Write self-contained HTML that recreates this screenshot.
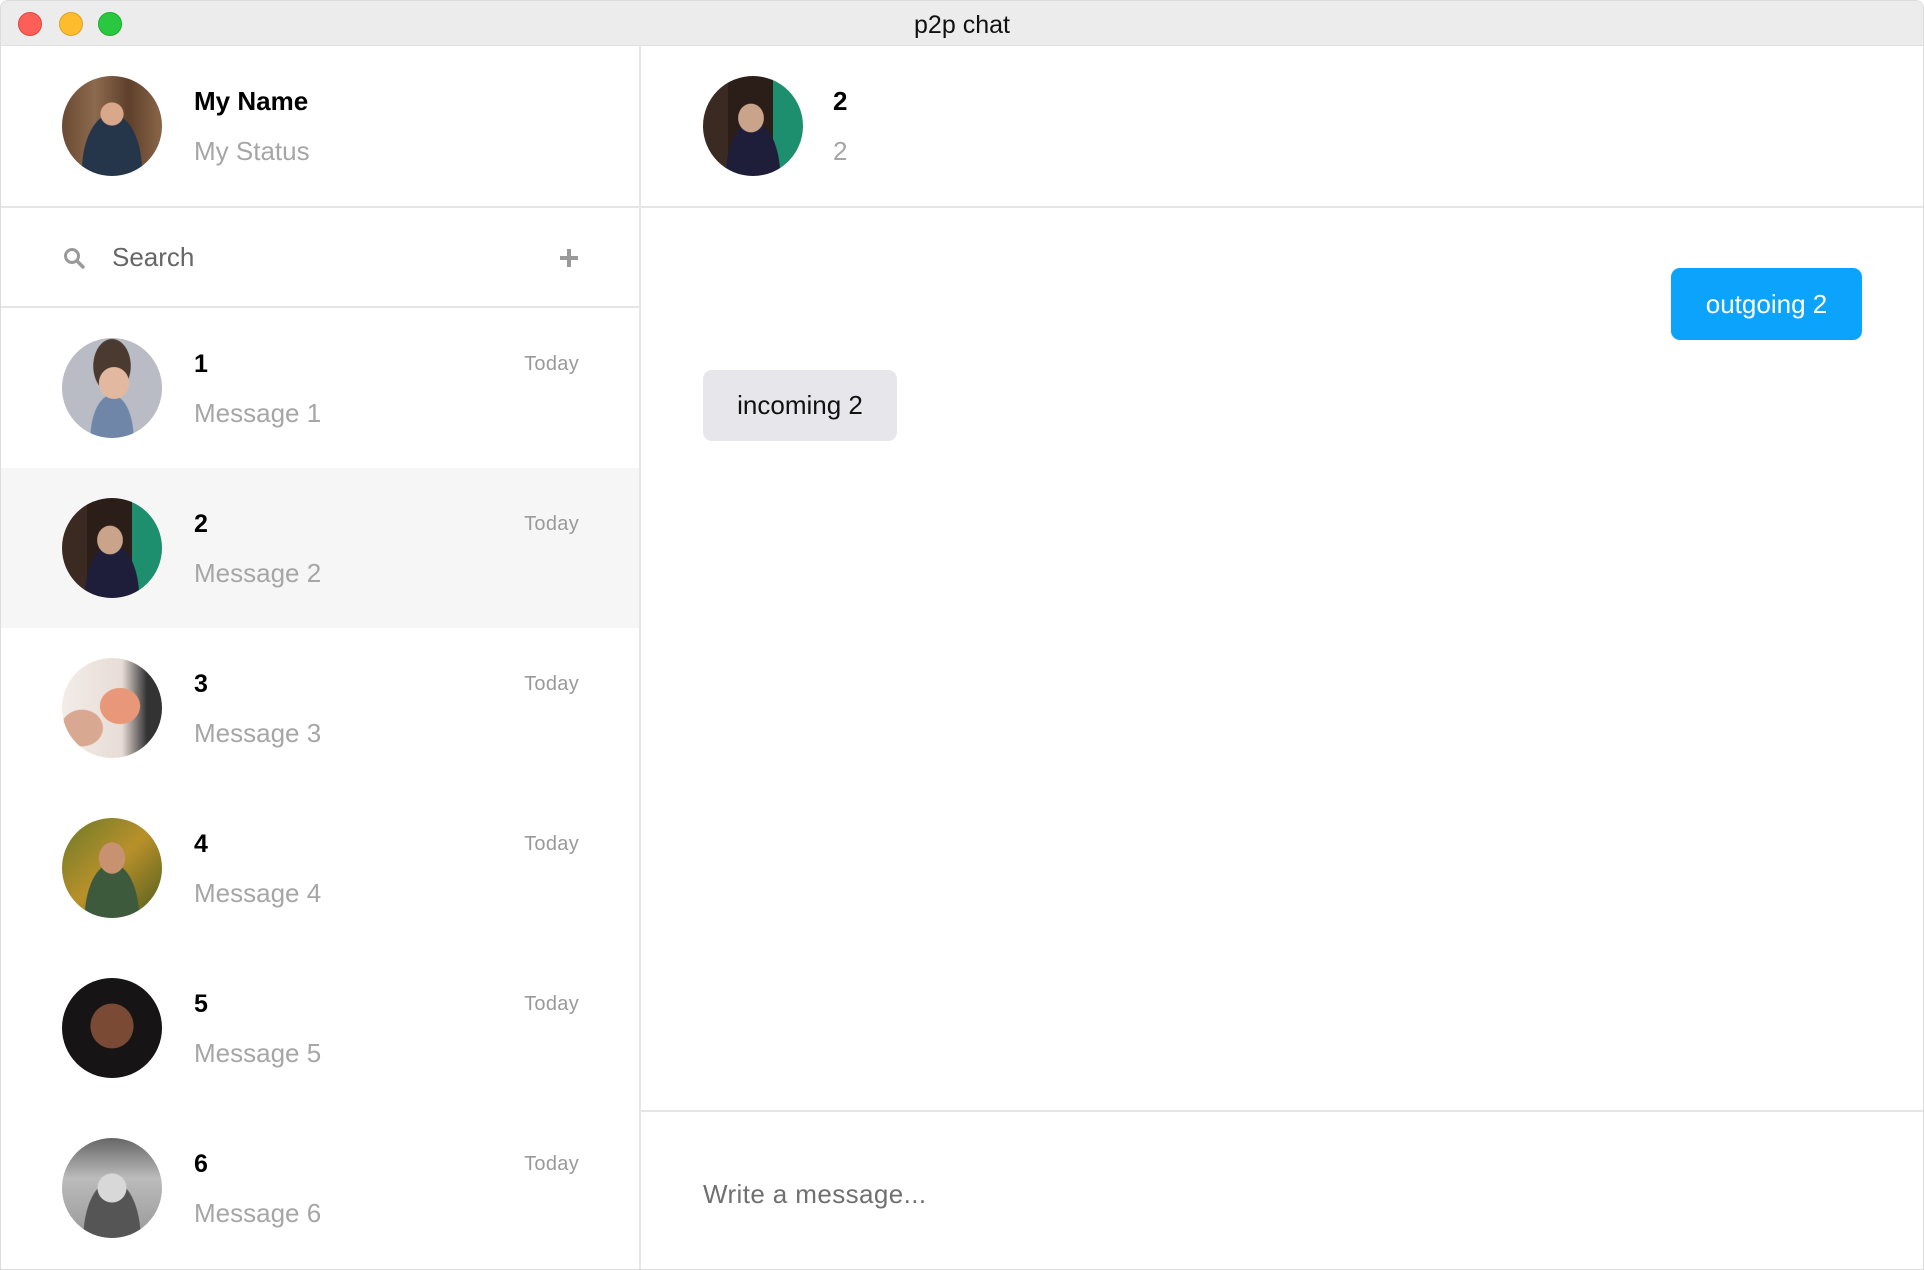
<!DOCTYPE html>
<html><head><meta charset="utf-8"><style>
*{box-sizing:border-box;margin:0;padding:0}
body{width:1924px;height:1270px;background:#fff;font-family:"Liberation Sans",sans-serif;overflow:hidden;position:relative}
.win{position:absolute;left:0;top:0;width:1924px;height:1270px;border:1px solid #dcdcdc;border-radius:8px 8px 0 0;overflow:hidden;background:#fff}
.title{position:absolute;left:0;top:0;width:100%;height:45px;background:#ececec;border-bottom:1px solid #e0e0e0;text-align:center;line-height:48px;font-size:25px;color:#111}
.tl{position:absolute;top:11px;width:24px;height:24px;border-radius:50%}
.side{position:absolute;left:0;top:45px;width:640px;bottom:0;border-right:2px solid #e6e6e6}
.hdr{position:absolute;left:0;top:0;width:100%;height:162px;border-bottom:2px solid #e6e6e6}
.av{position:absolute;width:100px;height:100px;border-radius:50%;overflow:hidden}
.nm{position:absolute;font-size:26px;font-weight:bold;color:#000}
.st{position:absolute;font-size:26px;color:#a6a6a6}
.search{position:absolute;left:0;top:162px;width:100%;height:100px;border-bottom:2px solid #e6e6e6}
.row{position:absolute;left:0;width:638px;height:160px}
.today{position:absolute;right:60px;font-size:20px;color:#9a9a9a;letter-spacing:0.3px}
.main{position:absolute;left:640px;top:45px;right:0;bottom:0}
.bub{position:absolute;font-size:26px;border-radius:9px;text-align:center}
</style></head><body><div class="win">
<div class="title">p2p chat
<div class="tl" style="left:17px;background:#fc5f57;border:1px solid #e0443e"></div>
<div class="tl" style="left:58px;background:#fdbc2e;border:1px solid #dea123"></div>
<div class="tl" style="left:97px;background:#29c840;border:1px solid #1aab29"></div>
</div>
<div class="side">
 <div class="hdr">
  <div class="av" style="left:61px;top:30px;background:radial-gradient(circle at 50% 38%,#d9a88a 0 14%,transparent 15%),radial-gradient(ellipse at 50% 95%,#26364a 0 42%,transparent 43%),linear-gradient(90deg,#6b4a33,#8c6a4e,#5e402b,#8a6648)"></div>
  <div class="nm" style="left:193px;top:40px">My Name</div>
  <div class="st" style="left:193px;top:90px">My Status</div>
 </div>
 <div class="search">
  <svg style="position:absolute;left:62px;top:39px" width="22" height="22" viewBox="0 0 22 22"><circle cx="9" cy="9" r="6.5" fill="none" stroke="#9a9a9a" stroke-width="3"/><line x1="14" y1="14" x2="20" y2="20" stroke="#9a9a9a" stroke-width="3.5" stroke-linecap="round"/></svg>
  <div style="position:absolute;left:111px;top:34px;font-size:26px;color:#666">Search</div>
  <svg style="position:absolute;left:558px;top:40px" width="20" height="20" viewBox="0 0 20 20"><path d="M10 1v18M1 10h18" stroke="#999" stroke-width="4"/></svg>
 </div>

 <div class="row" style="top:262px">
  <div class="av" style="left:61px;top:30px;background:radial-gradient(ellipse at 52% 45%,#e2b9a0 0 20%,transparent 21%),radial-gradient(ellipse at 50% 28%,#4a3a30 0 26%,transparent 27%),radial-gradient(ellipse at 50% 100%,#6f86a8 0 30%,transparent 31%),#b9bcc4"></div>
  <div class="nm" style="left:193px;top:42px;font-size:25px">1</div>
  <div class="today" style="top:45px">Today</div>
  <div class="st" style="left:193px;top:90px">Message 1</div>
 </div>
 <div class="row" style="top:422px;background:#f6f6f6">
  <div class="av" style="left:61px;top:30px;background:radial-gradient(ellipse at 48% 42%,#c9a48a 0 17%,transparent 18%),radial-gradient(ellipse at 50% 100%,#1f1e3a 0 38%,transparent 39%),linear-gradient(90deg,#3a2a22 0 25%,#2b1e18 25% 70%,#1e8f6e 70%)"></div>
  <div class="nm" style="left:193px;top:42px;font-size:25px">2</div>
  <div class="today" style="top:45px">Today</div>
  <div class="st" style="left:193px;top:90px">Message 2</div>
 </div>
 <div class="row" style="top:582px">
  <div class="av" style="left:61px;top:30px;background:radial-gradient(ellipse at 58% 48%,#e89878 0 24%,transparent 25%),radial-gradient(ellipse at 20% 70%,#d8a890 0 18%,transparent 19%),linear-gradient(90deg,#f2ece8,#e8dcd6 60%,#333 85%)"></div>
  <div class="nm" style="left:193px;top:42px;font-size:25px">3</div>
  <div class="today" style="top:45px">Today</div>
  <div class="st" style="left:193px;top:90px">Message 3</div>
 </div>
 <div class="row" style="top:742px">
  <div class="av" style="left:61px;top:30px;background:radial-gradient(ellipse at 50% 40%,#c89270 0 18%,transparent 19%),radial-gradient(ellipse at 50% 100%,#3e5a3c 0 38%,transparent 39%),linear-gradient(135deg,#6b7a2a,#b9902a,#4e5d1e)"></div>
  <div class="nm" style="left:193px;top:42px;font-size:25px">4</div>
  <div class="today" style="top:45px">Today</div>
  <div class="st" style="left:193px;top:90px">Message 4</div>
 </div>
 <div class="row" style="top:902px">
  <div class="av" style="left:61px;top:30px;background:radial-gradient(ellipse at 50% 48%,#7a4a34 0 30%,transparent 31%),#161414"></div>
  <div class="nm" style="left:193px;top:42px;font-size:25px">5</div>
  <div class="today" style="top:45px">Today</div>
  <div class="st" style="left:193px;top:90px">Message 5</div>
 </div>
 <div class="row" style="top:1062px">
  <div class="av" style="left:61px;top:30px;background:radial-gradient(ellipse at 50% 50%,#d8d8d8 0 20%,transparent 21%),radial-gradient(ellipse at 50% 100%,#555 0 40%,transparent 41%),linear-gradient(#666,#bbb 40%,#999)"></div>
  <div class="nm" style="left:193px;top:42px;font-size:25px">6</div>
  <div class="today" style="top:45px">Today</div>
  <div class="st" style="left:193px;top:90px">Message 6</div>
 </div>
</div>
<div class="main">
 <div class="hdr" style="width:100%">
  <div class="av" style="left:62px;top:30px;background:radial-gradient(ellipse at 48% 42%,#c9a48a 0 17%,transparent 18%),radial-gradient(ellipse at 50% 100%,#1f1e3a 0 38%,transparent 39%),linear-gradient(90deg,#3a2a22 0 25%,#2b1e18 25% 70%,#1e8f6e 70%)"></div>
  <div class="nm" style="left:192px;top:40px">2</div>
  <div class="st" style="left:192px;top:90px">2</div>
 </div>
 <div class="bub" style="left:1030px;top:222px;width:191px;height:72px;line-height:72px;background:#0ba3fb;color:#fff">outgoing 2</div>
 <div class="bub" style="left:62px;top:324px;width:194px;height:71px;line-height:71px;background:#e6e6eb;color:#111">incoming 2</div>
 <div style="position:absolute;left:0;right:0;top:1064px;border-top:2px solid #e6e6e6"></div>
 <div style="position:absolute;left:62px;top:1133px;font-size:26px;color:#707070;letter-spacing:0.4px">Write a message...</div>
</div>
</div></body></html>
